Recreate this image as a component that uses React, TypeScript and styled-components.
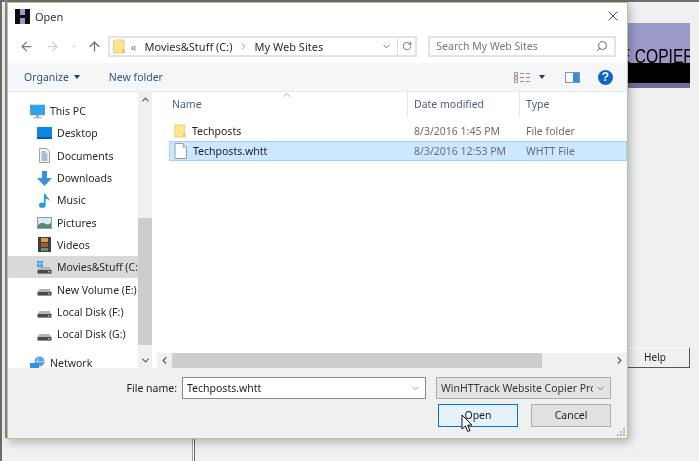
import React from 'react';
import styled, { createGlobalStyle } from 'styled-components';
import { ArrowLeft, ArrowRight, ArrowUp, ChevronDown, ChevronLeft, ChevronRight, ChevronUp, RotateCw, Search, X } from 'lucide-react';

const GlobalStyle = createGlobalStyle`
  html, body { margin: 0; padding: 0; background: #f0f0f0; }
  body { font-family: "Noto Sans", "Open Sans", sans-serif; font-size: 10.5px; color: #1c1c1c; }
  * { box-sizing: border-box; }
`;

const Desktop = styled.div`
  position: relative;
  width: 699px;
  height: 461px;
  overflow: hidden;
  background: #f0f0f0;
  filter: blur(0.4px);
`;

/* the program window behind the dialog */
const BackEdgeTop = styled.div`
  position: absolute;
  left: 0; top: 0; right: 0;
  height: 2px;
  background: #6e6e6e;
`;
const BackEdgeLeft = styled.div`
  position: absolute;
  left: 0; top: 0; bottom: 0;
  width: 2px;
  background: #6a6a6a;
`;
const BackInnerEdge = styled.div`
  position: absolute;
  left: 5px; top: 0;
  width: 2px; height: 438px;
  background: #8c8c8c;
`;
const BackDivider = styled.div`
  position: absolute;
  left: 192px; top: 430px; bottom: 0;
  width: 3px;
  border-left: 1px solid #a0a0a0;
  border-right: 1px solid #666;
  background: #fff;
`;
const Banner = styled.div`
  position: absolute;
  left: 620px; top: 23px;
  width: 70px; height: 65px;
  background: #9c99c9;
  overflow: hidden;
  border-bottom: 5px solid #6f6c9c;
`;
const BannerText = styled.div`
  height: 40px;
  padding-top: 23px;
  font-family: "Liberation Sans", sans-serif;
  font-size: 20px;
  line-height: 20px;
  color: #000;
  white-space: nowrap;
  transform: scaleX(0.78);
  transform-origin: left top;
`;
const BannerBar = styled.div`
  height: 20px;
  background: #000;
`;
const HelpButton = styled.div`
  position: absolute;
  left: 620px; top: 347px;
  width: 70px; height: 21px;
  background: #f0f0f0;
  border: 1px solid #fff;
  border-right: 1px solid #555;
  border-bottom: 1px solid #555;
  font-size: 10px;
  line-height: 19px;
  text-align: center;
`;

const Dialog = styled.div`
  position: absolute;
  left: 7px; top: 2px;
  width: 621px; height: 437px;
  display: flex;
  flex-direction: column;
  background: #fff;
  border: 1px solid #b4c68f;
  box-shadow: 2px 3px 9px rgba(0, 0, 0, 0.28);
`;

const TitleBar = styled.div`
  height: 26px;
  flex: none;
  display: flex;
  align-items: center;
  padding: 0 6px 0 7px;
  gap: 5px;
`;
const TitleText = styled.span`
  flex: 1;
  font-size: 11px;
  color: #333;
  padding-top: 1px;
`;

const NavRow = styled.div`
  height: 34px;
  flex: none;
  display: flex;
  align-items: center;
  padding: 0 11px;
`;
const NavIcon = styled.span<{ $w: number; $c: string; $l?: number }>`
  width: ${p => p.$w}px;
  margin-left: ${p => p.$l || 0}px;
  display: flex;
  justify-content: center;
  color: ${p => p.$c};
`;
const AddressBox = styled.div`
  width: 310px;
  height: 21px;
  display: flex;
  align-items: center;
  border: 2px solid #e3e3e3;
  padding-left: 3px;
  font-size: 11px;
  color: #2b2b2b;
`;
const Crumb = styled.span<{ $l: number }>`
  margin-left: ${p => p.$l}px;
  white-space: nowrap;
`;
const CrumbMark = styled(Crumb)`
  color: #777;
`;
const AddressEnd = styled.div`
  margin-left: auto;
  height: 100%;
  display: flex;
  align-items: center;
`;
const RefreshCell = styled.div`
  margin-left: 5px;
  width: 18px;
  height: 100%;
  border-left: 1px solid #dcdcdc;
  display: flex;
  align-items: center;
  justify-content: center;
  color: #666;
`;
const SearchBox = styled.div`
  width: 188px;
  height: 21px;
  margin-left: 11px;
  display: flex;
  align-items: center;
  justify-content: space-between;
  border: 2px solid #e3e3e3;
  padding: 0 6px;
  color: #777;
`;

const ToolBar = styled.div`
  height: 29px;
  flex: none;
  display: flex;
  align-items: center;
  padding: 0 14px 0 16px;
  background: #f4f6f8;
  border-bottom: 1px solid #e9ebee;
  color: #3b5273;
`;
const Caret = styled.span<{ $l: number }>`
  width: 0;
  height: 0;
  margin-left: ${p => p.$l}px;
  border-left: 3.5px solid transparent;
  border-right: 3.5px solid transparent;
  border-top: 4px solid #1f3a63;
`;
const NewFolder = styled.span`
  margin-left: 29px;
`;
const ToolRight = styled.div`
  margin-left: auto;
  display: flex;
  align-items: center;
`;
const ToolGap = styled.span`
  width: 20px;
`;
const HelpCircle = styled.span`
  width: 15px;
  height: 15px;
  margin-left: 18px;
  border-radius: 50%;
  background: #0a67c2;
  color: #fff;
  font-family: "Liberation Sans", sans-serif;
  font-weight: 700;
  font-size: 12px;
  line-height: 15px;
  text-align: center;
`;

const Main = styled.div`
  height: 276px;
  flex: none;
  display: flex;
  overflow: hidden;
`;
const NavPane = styled.div`
  width: 130px;
  flex: none;
  padding-top: 8px;
  overflow: hidden;
`;
const TreeRow = styled.div<{ $top?: boolean; $sel?: boolean; $gap?: number }>`
  height: 22.3px;
  margin-top: ${p => p.$gap || 0}px;
  display: flex;
  align-items: center;
  gap: 5px;
  padding-left: ${p => (p.$top ? 22 : 29)}px;
  background: ${p => (p.$sel ? '#d9d9d9' : 'transparent')};
  white-space: nowrap;
  color: #2a2a2a;
`;
const IconSlot = styled.span`
  width: 15px;
  height: 15px;
  flex: none;
  display: flex;
  align-items: center;
  justify-content: center;
`;
const VScroll = styled.div`
  width: 14px;
  flex: none;
  display: flex;
  flex-direction: column;
  background: #f0f0f0;
  color: #555;
`;
const ScrollBtn = styled.div`
  height: 15px;
  flex: none;
  display: flex;
  align-items: center;
  justify-content: center;
`;
const VTrack = styled.div`
  flex: 1;
  display: flex;
  flex-direction: column;
  justify-content: flex-end;
  padding-bottom: 8px;
`;
const VThumb = styled.div`
  height: 127px;
  background: #cdcdcd;
`;
const FilePane = styled.div`
  flex: 1;
  margin-left: 5px;
  display: flex;
  flex-direction: column;
`;
const HeaderRow = styled.div`
  position: relative;
  height: 24px;
  flex: none;
  display: flex;
  align-items: center;
  color: #4c607a;
`;
const HeadCell = styled.div<{ $w: number; $pad: number; $last?: boolean }>`
  width: ${p => p.$w}px;
  height: 100%;
  padding-left: ${p => p.$pad}px;
  padding-top: 5px;
  border-right: 1px solid ${p => (p.$last ? 'transparent' : '#e5e5e5')};
`;
const SortMark = styled.span`
  position: absolute;
  left: 124px;
  top: -3px;
  color: #8a8a8a;
  display: flex;
`;
const Rows = styled.div`
  flex: 1;
  padding-top: 6px;
`;
const FileRow = styled.div<{ $sel?: boolean }>`
  height: ${p => (p.$sel ? 20 : 19)}px;
  margin-left: 12px;
  padding-bottom: 1px;
  display: flex;
  align-items: center;
  border: 1px solid ${p => (p.$sel ? '#99d1ff' : 'transparent')};
  background: ${p => (p.$sel ? '#cce8ff' : 'transparent')};
  color: #6d6d6d;
`;
const NameCell = styled.div`
  width: 238px;
  display: flex;
  align-items: center;
  gap: 6px;
  padding-left: 4px;
  color: #222;
`;
const DateCell = styled.div`
  width: 112px;
  padding-left: 6px;
`;
const TypeCell = styled.div`
  padding-left: 6px;
`;
const HScroll = styled.div`
  height: 15px;
  flex: none;
  display: flex;
  align-items: center;
  background: #f0f0f0;
  color: #555;
`;
const HArrow = styled.div`
  width: 15px;
  height: 100%;
  flex: none;
  display: flex;
  align-items: center;
  justify-content: center;
`;
const HThumb = styled.div`
  width: 370px;
  height: 100%;
  background: #cdcdcd;
`;
const HSpace = styled.div`
  flex: 1;
`;

const Footer = styled.div`
  position: relative;
  flex: 1;
  background: #f0f0f0;
  padding: 9px 16px 0 0;
`;
const FieldRow = styled.div`
  display: flex;
  align-items: center;
  justify-content: flex-end;
`;
const FieldLabel = styled.span`
  margin-right: 5px;
  color: #222;
`;
const NameInput = styled.div`
  width: 244px;
  height: 22px;
  display: flex;
  align-items: center;
  justify-content: space-between;
  padding: 0 4px;
  background: #fff;
  border: 1px solid #8a8a8a;
  color: #222;
`;
const FilterSelect = styled.div`
  width: 175px;
  height: 22px;
  margin-left: 10px;
  display: flex;
  align-items: center;
  justify-content: space-between;
  padding: 0 4px;
  background: #e4e4e4;
  border: 1px solid #adadad;
  color: #333;
  white-space: nowrap;
  overflow: hidden;
`;
const FilterText = styled.span`
  width: 152px;
  overflow: hidden;
`;
const ButtonRow = styled.div`
  margin-top: 5px;
  display: flex;
  justify-content: flex-end;
  gap: 13px;
`;
const DialogButton = styled.div<{ $primary?: boolean }>`
  width: 80px;
  height: 23px;
  text-align: center;
  line-height: 20px;
  color: #222;
  background: ${p => (p.$primary ? '#e5f1fb' : '#e1e1e1')};
  border: 1px solid ${p => (p.$primary ? '#0078d7' : '#adadad')};
`;
const Pointer = styled.svg`
  position: absolute;
  left: 453px;
  top: 46px;
`;
const Grip = styled.svg`
  position: absolute;
  right: 1px;
  bottom: 1px;
`;

const LogoH = () => (
  <svg width="15" height="15" viewBox="0 0 15 15">
    <rect width="15" height="15" fill="#9c99c9" />
    <path d="M0 0h5v6h5V0h5v15h-5V9H5v6H0z" fill="#0d0d14" />
  </svg>
);
const Folder = ({ w = 12, h = 15 }: { w?: number; h?: number }) => (
  <svg width={w} height={h} viewBox="0 0 12 15">
    <path d="M0.5 1h10.5v13H0.5z" fill="#fde58e" stroke="#e9cf7a" />
    <path d="M9 10h3v4H9z" fill="#e8c867" />
  </svg>
);
const PageIcon = () => (
  <svg width="13" height="16" viewBox="0 0 13 16">
    <path d="M1 .5h8l3.5 3.5v11.5H1z" fill="#fff" stroke="#9a9a9a" />
    <path d="M9 .5V4h3.5" fill="#eee" stroke="#9a9a9a" />
  </svg>
);
const Monitor = () => (
  <svg width="15" height="15" viewBox="0 0 15 15">
    <rect x="0" y="1" width="15" height="10" fill="#2aa5ee" stroke="#8a9aa8" strokeWidth="0.7" />
    <rect x="6" y="11" width="3" height="2" fill="#9aa5ad" />
    <rect x="3" y="13" width="9" height="1.5" fill="#b7bfc5" />
  </svg>
);
const DesktopIcon = () => (
  <svg width="15" height="12" viewBox="0 0 15 12">
    <rect width="15" height="12" fill="#0d87e6" />
    <rect y="10" width="15" height="2" fill="#0a5aa8" />
  </svg>
);
const DocsIcon = () => (
  <svg width="11" height="15" viewBox="0 0 11 15">
    <path d="M.5.5h7l3 3v11H.5z" fill="#f2f4f6" stroke="#9ba3aa" />
    <path d="M2.5 4h4M2.5 6h6M2.5 8h6M2.5 10h6M2.5 12h6" stroke="#5f88ab" />
  </svg>
);
const DownloadIcon = () => (
  <svg width="15" height="15" viewBox="0 0 15 15">
    <path d="M5 0h5v7h5l-7.5 8L0 7h5z" fill="#3a8fd8" />
  </svg>
);
const MusicIcon = () => (
  <svg width="11" height="15" viewBox="0 0 11 15">
    <ellipse cx="3.2" cy="12.2" rx="3.2" ry="2.6" fill="#1e9be8" />
    <path d="M5 1h1.6c.4 3 4.4 3.6 3.8 7.6-.6-1.8-2-2.8-3.8-3V12H5z" fill="#1e9be8" />
  </svg>
);
const PicturesIcon = () => (
  <svg width="15" height="12" viewBox="0 0 15 12">
    <rect x=".5" y=".5" width="14" height="11" fill="#dbe9f2" stroke="#9a9a9a" />
    <path d="M1 8c3-3 6-2 8-1s3 0 5-1v5H1z" fill="#4f8a7a" />
  </svg>
);
const VideosIcon = () => (
  <svg width="13" height="15" viewBox="0 0 13 15">
    <rect width="13" height="15" fill="#3a3f45" />
    <rect x="3" y="1" width="7" height="4" fill="#d9a13c" />
    <rect x="3" y="6" width="7" height="4" fill="#b0523d" />
    <rect x="3" y="11" width="7" height="3" fill="#5c9c55" />
  </svg>
);
const DiskIcon = ({ windows }: { windows?: boolean }) => (
  <svg width="15" height="15" viewBox="0 0 15 15">
    {windows && <path d="M0 1h2.6v2.6H0zM3.3 1h2.6v2.6H3.3zM0 4.3h2.6v2.6H0zM3.3 4.3h2.6v2.6H3.3z" fill="#1fa6ee" />}
    <path d="M2.5 7h10l2 3H.5z" fill="#b5b5b5" />
    <rect x=".5" y="10" width="14" height="3.6" fill="#4a4a4a" />
    <rect x="11" y="11" width="2" height="1.4" fill="#6fd06f" />
  </svg>
);
const NetworkIcon = () => (
  <svg width="15" height="15" viewBox="0 0 15 15">
    <circle cx="9.5" cy="5.5" r="5" fill="#5d9fd6" />
    <path d="M8 1.5v8M5 5.5h9" stroke="#d5e7f5" strokeWidth="0.7" />
    <rect x="0" y="7" width="9" height="7" fill="#2f8fe0" />
  </svg>
);
const ViewsIcon = () => (
  <svg width="16" height="11" viewBox="0 0 16 11">
    <rect x=".5" y=".5" width="3" height="2.6" fill="#fff" stroke="#a0a0a0" />
    <rect x=".5" y="4.2" width="3" height="2.6" fill="#fff" stroke="#c77" />
    <rect x=".5" y="7.9" width="3" height="2.6" fill="#fff" stroke="#a0a0a0" />
    <path d="M6 1.5h4M12 1.5h4M6 5.5h4M12 5.5h4M6 9.5h4M12 9.5h4" stroke="#8c8c8c" />
  </svg>
);
const PaneIcon = () => (
  <svg width="15" height="11" viewBox="0 0 15 11">
    <rect x=".5" y=".5" width="14" height="10" fill="#fff" stroke="#8a9299" />
    <rect x="8" y="1" width="6" height="9" fill="#2f8fe0" />
  </svg>
);

const folders = [
  { label: 'Desktop', icon: <DesktopIcon /> },
  { label: 'Documents', icon: <DocsIcon /> },
  { label: 'Downloads', icon: <DownloadIcon /> },
  { label: 'Music', icon: <MusicIcon /> },
  { label: 'Pictures', icon: <PicturesIcon /> },
  { label: 'Videos', icon: <VideosIcon /> },
  { label: 'Movies&Stuff (C:)', icon: <DiskIcon windows />, selected: true },
  { label: 'New Volume (E:)', icon: <DiskIcon /> },
  { label: 'Local Disk (F:)', icon: <DiskIcon /> },
  { label: 'Local Disk (G:)', icon: <DiskIcon /> },
];

export default function App() {
  return (
    <Desktop>
      <GlobalStyle />
      <BackEdgeTop />
      <BackEdgeLeft />
      <BackInnerEdge />
      <BackDivider />
      <Banner>
        <BannerText>E COPIER</BannerText>
        <BannerBar />
      </Banner>
      <HelpButton>Help</HelpButton>

      <Dialog>
        <TitleBar>
          <LogoH />
          <TitleText>Open</TitleText>
          <X size={16} strokeWidth={1.2} color="#222" />
        </TitleBar>

        <NavRow>
          <NavIcon $w={16} $c="#7d7d7d"><ArrowLeft size={15} strokeWidth={2} /></NavIcon>
          <NavIcon $w={36} $c="#d2d2d2"><ArrowRight size={15} strokeWidth={2} /></NavIcon>
          <NavIcon $w={6} $c="#9a9a9a"><ChevronDown size={9} strokeWidth={2.5} /></NavIcon>
          <NavIcon $w={26} $l={5} $c="#6b6b6b"><ArrowUp size={15} strokeWidth={2} /></NavIcon>
          <AddressBox>
            <Folder />
            <CrumbMark $l={6}>«</CrumbMark>
            <Crumb $l={8}>Movies&amp;Stuff (C:)</Crumb>
            <ChevronRight size={9} color="#777" strokeWidth={2} style={{ marginLeft: 6 }} />
            <Crumb $l={7}>My Web Sites</Crumb>
            <AddressEnd>
              <ChevronDown size={11} color="#666" strokeWidth={2} />
              <RefreshCell><RotateCw size={10} strokeWidth={2} /></RefreshCell>
            </AddressEnd>
          </AddressBox>
          <SearchBox>
            <span>Search My Web Sites</span>
            <Search size={12} color="#666" strokeWidth={2} style={{ transform: 'scaleX(-1)' }} />
          </SearchBox>
        </NavRow>

        <ToolBar>
          <span>Organize</span>
          <Caret $l={5} />
          <NewFolder>New folder</NewFolder>
          <ToolRight>
            <ViewsIcon />
            <Caret $l={9} />
            <ToolGap />
            <PaneIcon />
            <HelpCircle>?</HelpCircle>
          </ToolRight>
        </ToolBar>

        <Main>
          <NavPane>
            <TreeRow $top>
              <IconSlot><Monitor /></IconSlot>
              This PC
            </TreeRow>
            {folders.map(f => (
              <TreeRow key={f.label} $sel={f.selected}>
                <IconSlot>{f.icon}</IconSlot>
                {f.label}
              </TreeRow>
            ))}
            <TreeRow $top $gap={7}>
              <IconSlot><NetworkIcon /></IconSlot>
              Network
            </TreeRow>
          </NavPane>
          <VScroll>
            <ScrollBtn><ChevronUp size={11} strokeWidth={2.5} /></ScrollBtn>
            <VTrack><VThumb /></VTrack>
            <ScrollBtn><ChevronDown size={11} strokeWidth={2.5} /></ScrollBtn>
          </VScroll>
          <FilePane>
            <HeaderRow>
              <SortMark><ChevronUp size={12} strokeWidth={1.5} /></SortMark>
              <HeadCell $w={251} $pad={15}>Name</HeadCell>
              <HeadCell $w={112} $pad={6}>Date modified</HeadCell>
              <HeadCell $w={80} $pad={6} $last>Type</HeadCell>
            </HeaderRow>
            <Rows>
              <FileRow>
                <NameCell><Folder w={12} h={14} />Techposts</NameCell>
                <DateCell>8/3/2016 1:45 PM</DateCell>
                <TypeCell>File folder</TypeCell>
              </FileRow>
              <FileRow $sel>
                <NameCell><PageIcon />Techposts.whtt</NameCell>
                <DateCell>8/3/2016 12:53 PM</DateCell>
                <TypeCell>WHTT File</TypeCell>
              </FileRow>
            </Rows>
            <HScroll>
              <HArrow><ChevronLeft size={11} strokeWidth={2.5} /></HArrow>
              <HThumb />
              <HSpace />
              <HArrow><ChevronRight size={11} strokeWidth={2.5} /></HArrow>
            </HScroll>
          </FilePane>
        </Main>

        <Footer>
          <FieldRow>
            <FieldLabel>File name:</FieldLabel>
            <NameInput>
              Techposts.whtt
              <ChevronDown size={11} color="#777" strokeWidth={1.5} />
            </NameInput>
            <FilterSelect>
              <FilterText>WinHTTrack Website Copier Project</FilterText>
              <ChevronDown size={11} color="#555" strokeWidth={1.5} />
            </FilterSelect>
          </FieldRow>
          <ButtonRow>
            <DialogButton $primary>Open</DialogButton>
            <DialogButton>Cancel</DialogButton>
          </ButtonRow>
          <Pointer width="12" height="19" viewBox="0 0 12 19">
            <path d="M1 1v14l3.4-3 2.3 5.5 2.3-1-2.3-5.4H11z" fill="#fff" stroke="#111" strokeWidth="1" />
          </Pointer>
          <Grip width="10" height="10" viewBox="0 0 10 10">
            <path d="M7 1h2v2H7zM4 4h2v2H4zM7 4h2v2H7zM1 7h2v2H1zM4 7h2v2H4zM7 7h2v2H7z" fill="#b8b8b8" />
          </Grip>
        </Footer>
      </Dialog>
    </Desktop>
  );
}
